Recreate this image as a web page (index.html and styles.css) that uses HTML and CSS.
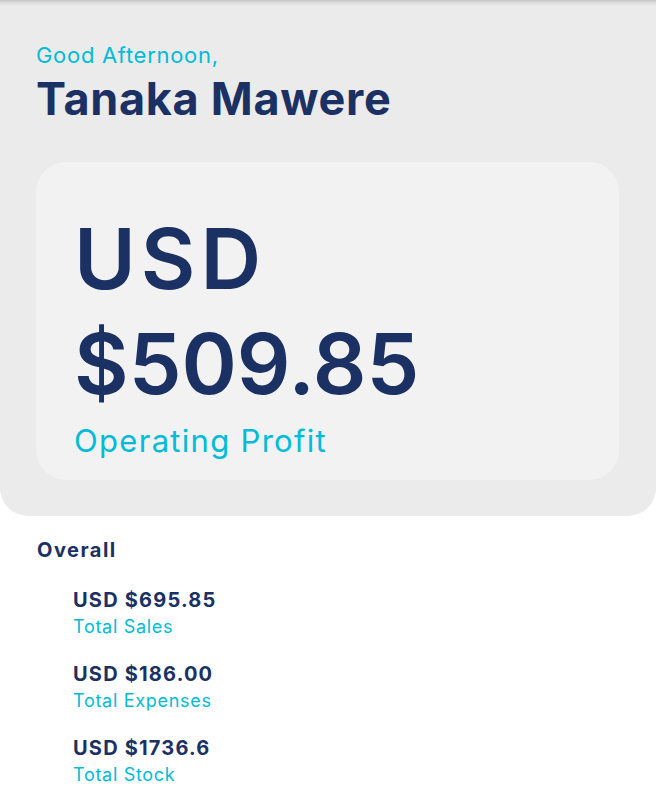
FILE: index.html
```html
<!DOCTYPE html>
<html>
<head>
<meta charset="utf-8">
<link rel="stylesheet" href="styles.css">
</head>
<body>
<div class="topshadow"></div>
<header class="hero">
  <div class="greeting">Good Afternoon,</div>
  <div class="name">Tanaka Mawere</div>
  <section class="profit-card">
    <div class="amount"><span class="currency">USD</span><br>$509.85</div>
    <div class="amount-label">Operating Profit</div>
  </section>
</header>
<main class="overall">
  <h2 class="overall-title">Overall</h2>
  <ul class="stats">
    <li class="stat"><div class="stat-value">USD $695.85</div><div class="stat-label">Total Sales</div></li>
    <li class="stat"><div class="stat-value">USD $186.00</div><div class="stat-label">Total Expenses</div></li>
    <li class="stat"><div class="stat-value">USD $1736.6</div><div class="stat-label">Total Stock</div></li>
  </ul>
</main>
</body>
</html>
```
FILE: styles.css
```css
* { box-sizing: border-box; }
html, body { margin: 0; padding: 0; }
body {
  background: #ffffff;
  font-family: Inter, "Noto Sans", sans-serif;
  color: #1b3163;
  width: 656px;
  height: 802px;
  overflow: hidden;
  position: relative;
}
.topshadow {
  position: absolute;
  top: 0; left: 0; right: 0;
  height: 6px;
  background: linear-gradient(to bottom, #c4c4c4 0%, #dcdcdc 45%, #ebebeb 100%);
  z-index: 2;
}
.hero {
  background: #ebebeb;
  border-radius: 0 0 28px 28px;
  padding: 40px 37px 36px 36px;
  display: flex;
  flex-direction: column;
}
.greeting {
  color: #00bcd8;
  font-size: 22px;
  font-weight: 400;
  line-height: 30px;
  letter-spacing: 0.7px;
}
.name {
  font-size: 45px;
  font-weight: 700;
  line-height: 52px;
  margin-top: 3px;
  letter-spacing: 0.7px;
}
.profit-card {
  margin-top: 37px;
  background: #f2f2f2;
  border-radius: 30px;
  height: 318px;
  padding: 44px 20px 0 38px;
}
.amount {
  font-size: 84px;
  font-weight: 600;
  line-height: 105px;
}
.currency {
  letter-spacing: 5px;
}
.amount-label {
  color: #00bcd8;
  font-size: 31px;
  font-weight: 400;
  line-height: 40px;
  margin-top: 5px;
  letter-spacing: 1.3px;
}
.overall {
  padding: 19px 0 0 37px;
}
.overall-title {
  margin: 0;
  font-size: 20px;
  font-weight: 700;
  line-height: 30px;
  letter-spacing: 1.5px;
}
.stats {
  list-style: none;
  margin: 22px 0 0;
  padding: 0 0 0 36px;
  display: flex;
  flex-direction: column;
  gap: 21px;
}
.stat-value {
  font-size: 20px;
  font-weight: 700;
  line-height: 26px;
  letter-spacing: 1.2px;
}
.stat-label {
  color: #00bcd8;
  font-size: 18px;
  font-weight: 400;
  line-height: 27px;
  letter-spacing: 0.7px;
}
```
